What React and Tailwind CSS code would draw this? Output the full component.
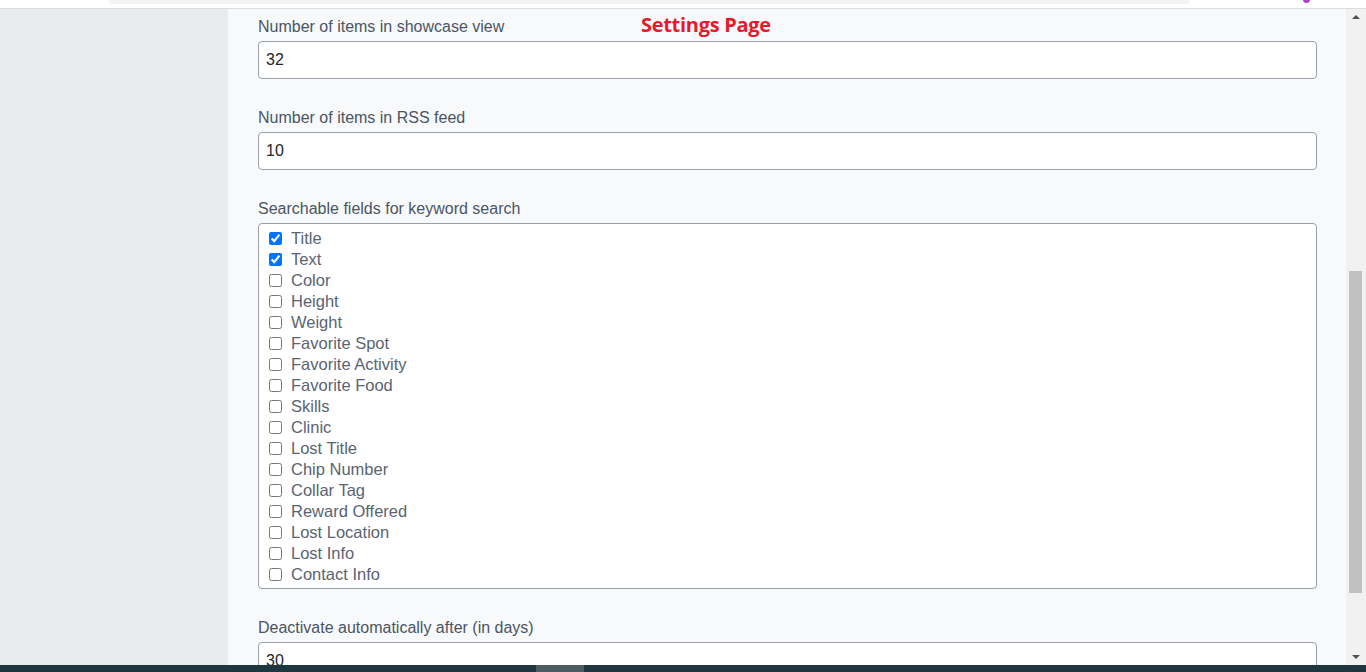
import React from "react";

const fields = [
  { name: "Title", checked: true },
  { name: "Text", checked: true },
  { name: "Color" },
  { name: "Height" },
  { name: "Weight" },
  { name: "Favorite Spot" },
  { name: "Favorite Activity" },
  { name: "Favorite Food" },
  { name: "Skills" },
  { name: "Clinic" },
  { name: "Lost Title" },
  { name: "Chip Number" },
  { name: "Collar Tag" },
  { name: "Reward Offered" },
  { name: "Lost Location" },
  { name: "Lost Info" },
  { name: "Contact Info" },
];

const Label = ({ children }) => (
  <label className="block h-[22px] pt-[2px] text-[16px] leading-[20px] text-[#4a5563] mb-[4px]">
    {children}
  </label>
);

const TextField = ({ value }) => (
  <input
    type="text"
    defaultValue={value}
    className="block w-full h-[38px] rounded-[4px] border border-[#9aa0a8] bg-white px-[7px] text-[16px] text-[#212529] outline-none"
  />
);

const App = () => {
  return (
    <div
      className="relative flex h-[672px] w-[1366px] flex-col overflow-hidden bg-white"
      style={{ fontFamily: '"Liberation Sans", Arial, sans-serif' }}
    >
      {/* browser chrome remnant */}
      <div className="relative h-[9px] shrink-0 border-b border-[#dadce0] bg-white">
        <div className="absolute left-[108px] top-0 h-[4px] w-[1082px] rounded-b-[10px] bg-[#f1f3f4]" />
        <div className="absolute left-[1303px] top-[-4px] h-[7px] w-[7px] rounded-full bg-[#b040c8]" />
      </div>

      <div className="flex min-h-0 flex-1">
        <div className="w-[228px] shrink-0 bg-[#e9eced]" />

        <div className="relative min-w-0 flex-1 overflow-hidden bg-[#f8f9fb] pl-[30px] pr-[29px] pt-[6px]">
          <div
            className="absolute left-[413px] top-[4px] text-[20px] font-bold leading-[24px] text-[#e51b2b]"
            style={{ fontFamily: '"Open Sans", "Liberation Sans", sans-serif', letterSpacing: "-0.3px" }}
          >
            Settings Page
          </div>

          <div className="mb-[27px]">
            <Label>Number of items in showcase view</Label>
            <TextField value="32" />
          </div>

          <div className="mb-[27px]">
            <Label>Number of items in RSS feed</Label>
            <TextField value="10" />
          </div>

          <div className="mb-[27px]">
            <Label>Searchable fields for keyword search</Label>
            <div className="rounded-[4px] border border-[#9aa0a8] bg-white pb-[3px] pl-[10px] pt-[4px]">
              {fields.map((f) => (
                <label key={f.name} className="flex h-[21px] items-center">
                  <input
                    type="checkbox"
                    defaultChecked={!!f.checked}
                    className="m-0 h-[13px] w-[13px] shrink-0"
                  />
                  <span className="ml-[9px] text-[16.5px] leading-[21px] text-[#5a6473]">{f.name}</span>
                </label>
              ))}
            </div>
          </div>

          <div>
            <Label>Deactivate automatically after (in days)</Label>
            <TextField value="30" />
          </div>
        </div>

        {/* scrollbar */}
        <div className="relative w-[20px] shrink-0 bg-[#f1f1f1]">
          <div className="absolute left-[6px] top-[6px] h-0 w-0 border-x-[4px] border-b-[4px] border-x-transparent border-b-[#505050]" />
          <div className="absolute left-[3px] top-[262px] h-[322px] w-[13px] bg-[#c1c1c1]" />
          <div className="absolute bottom-[6px] left-[6px] h-0 w-0 border-x-[4px] border-t-[4px] border-x-transparent border-t-[#505050]" />
        </div>
      </div>

      {/* taskbar remnant */}
      <div className="flex h-[7px] shrink-0 bg-[#1f363e]">
        <div className="w-[536px]" />
        <div className="w-[48px] bg-[#4e5b60]" />
      </div>
    </div>
  );
};

export default App;
